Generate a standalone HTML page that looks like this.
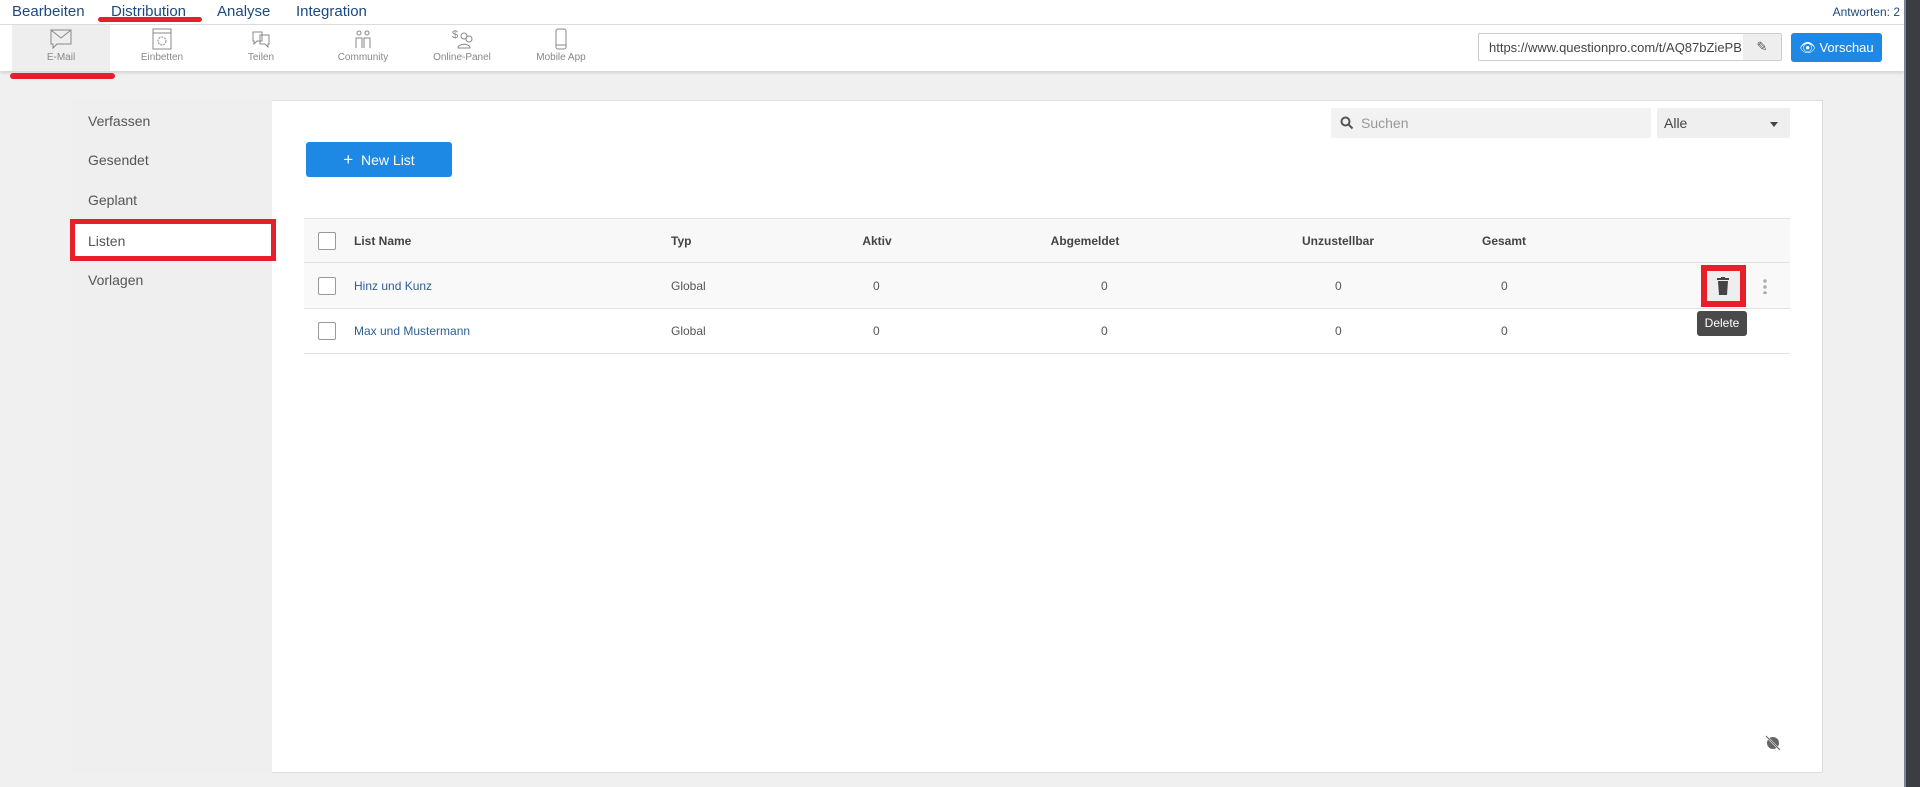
<!DOCTYPE html>
<html><head><meta charset="utf-8"><style>
*{box-sizing:border-box;margin:0;padding:0}
body{width:1920px;height:787px;overflow:hidden;background:#f0f0f0;font-family:"Liberation Sans",sans-serif;position:relative;color:#444}
.abs{position:absolute}
.top{left:0;top:0;width:1904px;height:25px;background:#fff;border-bottom:1px solid #ddd}
.top span{position:absolute;top:3px;font-size:15px;color:#1d4a7c}
.bar2{left:0;top:25px;width:1904px;height:46px;background:#fff;box-shadow:0 2px 3px rgba(0,0,0,.12)}
.tab{position:absolute;top:0;height:46px;text-align:center;font-size:10px;color:#888}
.tab svg{display:block;margin:3px auto 2px}
.red{background:#e5202a;border-radius:4px}
.card{left:72px;top:100px;width:1751px;height:673px;background:#fff;border:1px solid #ddd}
.side{left:72px;top:100px;width:200px;height:673px;background:#efefef}
.side div{position:absolute;left:16px;font-size:14px;color:#555}
.th{font-size:12px;font-weight:bold;color:#444;position:absolute}
.td{font-size:12px;color:#555;position:absolute}
.cb{position:absolute;left:318px;width:18px;height:18px;border:1px solid #999;border-radius:2px;background:#fff}
.link{color:#2e5f94}
</style></head><body>
<div class="abs top">
<span style="left:12px">Bearbeiten</span>
<span style="left:111px">Distribution</span>
<span style="left:217px">Analyse</span>
<span style="left:296px">Integration</span>
<span style="right:4px;font-size:12px;top:5px">Antworten: 2</span>
</div>
<div class="abs red" style="left:98px;top:17px;width:104px;height:5px"></div>
<div class="abs bar2">
<div class="tab" style="left:12px;width:98px;background:#eee"><svg width="22" height="22" viewBox="0 0 22 22"><path d="M1 2h20v14H7l-4 4v-4H1z M1 2l10 8 10-8" fill="none" stroke="#888" stroke-width="1"/></svg>E-Mail</div>
<div class="tab" style="left:113px;width:98px"><svg width="22" height="22" viewBox="0 0 22 22"><rect x="2" y="1" width="18" height="20" fill="none" stroke="#888"/><line x1="2" y1="5" x2="20" y2="5" stroke="#888"/><circle cx="11" cy="13" r="4" fill="none" stroke="#888" stroke-dasharray="2 1"/></svg>Einbetten</div>
<div class="tab" style="left:212px;width:98px"><svg width="22" height="22" viewBox="0 0 22 22"><path d="M3 4h9v9H7l-3 3v-3H3z M10 7h9v9h-1v3l-3-3h-5z" fill="none" stroke="#888"/></svg>Teilen</div>
<div class="tab" style="left:314px;width:98px"><svg width="22" height="22" viewBox="0 0 22 22"><circle cx="7" cy="5" r="2" fill="none" stroke="#888"/><circle cx="15" cy="5" r="2" fill="none" stroke="#888"/><path d="M4 20V10h6v10M12 20V10h6v10" fill="none" stroke="#888"/></svg>Community</div>
<div class="tab" style="left:413px;width:98px"><svg width="24" height="22" viewBox="0 0 24 22"><text x="2" y="10" font-size="11" fill="#888" font-family="Liberation Sans">$</text><circle cx="14" cy="8" r="3" fill="none" stroke="#888"/><circle cx="19" cy="11" r="3" fill="none" stroke="#888"/><path d="M8 20c0-5 12-5 12 0z" fill="none" stroke="#888"/></svg>Online-Panel</div>
<div class="tab" style="left:512px;width:98px"><svg width="22" height="22" viewBox="0 0 22 22"><rect x="6" y="1" width="10" height="20" rx="2" fill="none" stroke="#888"/><line x1="6" y1="17" x2="16" y2="17" stroke="#888"/></svg>Mobile App</div>
<div class="abs" style="left:1478px;top:8px;width:304px;height:28px;border:1px solid #ccc;border-radius:2px;font-size:13px;color:#444;padding:6px 10px">https://www.questionpro.com/t/AQ87bZiePB</div>
<div class="abs" style="left:1743px;top:9px;width:38px;height:26px;background:#eee;text-align:center;font-size:13px;line-height:26px;color:#555">✎</div>
<div class="abs" style="left:1791px;top:8px;width:91px;height:29px;background:#1e88e5;border-radius:3px;color:#fff;font-size:13px;line-height:29px;text-align:center">👁 Vorschau</div>
</div>
<div class="abs red" style="left:10px;top:73px;width:105px;height:6px"></div>
<div class="abs" style="left:1904px;top:0;width:16px;height:787px;background:#3a3d42;border-left:2px solid #7c8591"></div>

<div class="abs card"></div>
<div class="abs side">
<div style="top:13px">Verfassen</div>
<div style="top:52px">Gesendet</div>
<div style="top:92px">Geplant</div>
<div style="top:133px">Listen</div>
<div style="top:172px">Vorlagen</div>
</div>
<div class="abs" style="left:70px;top:219px;width:206px;height:42px;border:5px solid #e5202a;background:#fff"></div>
<div class="abs" style="left:88px;top:233px;font-size:14px;color:#555">Listen</div>

<div class="abs" style="left:1331px;top:108px;width:320px;height:30px;background:#f2f2f2;border-radius:2px;font-size:14px;color:#999;padding:7px 30px">Suchen</div>
<svg class="abs" style="left:1340px;top:116px" width="14" height="14" viewBox="0 0 14 14"><circle cx="5.5" cy="5.5" r="4" fill="none" stroke="#555" stroke-width="2"/><line x1="8.5" y1="8.5" x2="12.5" y2="12.5" stroke="#555" stroke-width="2"/></svg>
<div class="abs" style="left:1657px;top:108px;width:133px;height:30px;background:#efefef;border-radius:2px;font-size:14px;color:#444;padding:7px 7px">Alle</div>
<div class="abs" style="left:1770px;top:122px;border:4px solid transparent;border-top:5px solid #444"></div>

<div class="abs" style="left:306px;top:142px;width:146px;height:35px;background:#1e88e5;border-radius:3px;color:#fff;font-size:14px;line-height:35px;text-align:center"><b style="font-weight:normal;font-size:17px">+</b>&nbsp; New List</div>

<div class="abs" style="left:304px;top:218px;width:1486px;height:45px;background:#f8f8f8;border-top:1px solid #e2e2e2;border-bottom:1px solid #e2e2e2"></div>
<div class="abs" style="left:304px;top:263px;width:1486px;height:46px;background:#f9f9f9;border-bottom:1px solid #e2e2e2"></div>
<div class="abs" style="left:304px;top:309px;width:1486px;height:45px;border-bottom:1px solid #e2e2e2"></div>

<div class="cb" style="top:232px"></div>
<div class="cb" style="top:277px"></div>
<div class="cb" style="top:322px"></div>
<div class="th" style="left:354px;top:234px">List Name</div>
<div class="th" style="left:671px;top:234px">Typ</div>
<div class="th" style="left:877px;top:234px;transform:translateX(-50%)">Aktiv</div>
<div class="th" style="left:1085px;top:234px;transform:translateX(-50%)">Abgemeldet</div>
<div class="th" style="left:1338px;top:234px;transform:translateX(-50%)">Unzustellbar</div>
<div class="th" style="left:1504px;top:234px;transform:translateX(-50%)">Gesamt</div>

<div class="td link" style="left:354px;top:279px">Hinz und Kunz</div>
<div class="td" style="left:671px;top:279px">Global</div>
<div class="td" style="left:873px;top:279px">0</div>
<div class="td" style="left:1101px;top:279px">0</div>
<div class="td" style="left:1335px;top:279px">0</div>
<div class="td" style="left:1501px;top:279px">0</div>
<div class="td link" style="left:354px;top:324px">Max und Mustermann</div>
<div class="td" style="left:671px;top:324px">Global</div>
<div class="td" style="left:873px;top:324px">0</div>
<div class="td" style="left:1101px;top:324px">0</div>
<div class="td" style="left:1335px;top:324px">0</div>
<div class="td" style="left:1501px;top:324px">0</div>

<div class="abs" style="left:1701px;top:265px;width:45px;height:42px;border:6px solid #e5202a;background:#eee"></div>
<svg class="abs" style="left:1715px;top:277px" width="16" height="18" viewBox="0 0 16 18"><rect x="2" y="1" width="12" height="2" fill="#444"/><rect x="6" y="0" width="4" height="2" fill="#444"/><path d="M3 4h10l-1 14H4z" fill="#444"/></svg>
<div class="abs" style="left:1763px;top:278px;width:4px;height:16px;background:radial-gradient(circle,#aaa 1.5px,transparent 2px) 0 0/4px 6px"></div>
<div class="abs" style="left:1697px;top:311px;width:50px;height:25px;background:#4a4a4a;border-radius:3px;color:#fff;font-size:12px;line-height:25px;text-align:center">Delete</div>

<svg class="abs" style="left:1765px;top:735px" width="16" height="16" viewBox="0 0 16 16"><circle cx="8" cy="8" r="6" fill="#666"/><line x1="2" y1="2" x2="14" y2="14" stroke="#fff" stroke-width="2"/><line x1="1" y1="1" x2="15" y2="15" stroke="#666" stroke-width="1"/></svg>
</body></html>
